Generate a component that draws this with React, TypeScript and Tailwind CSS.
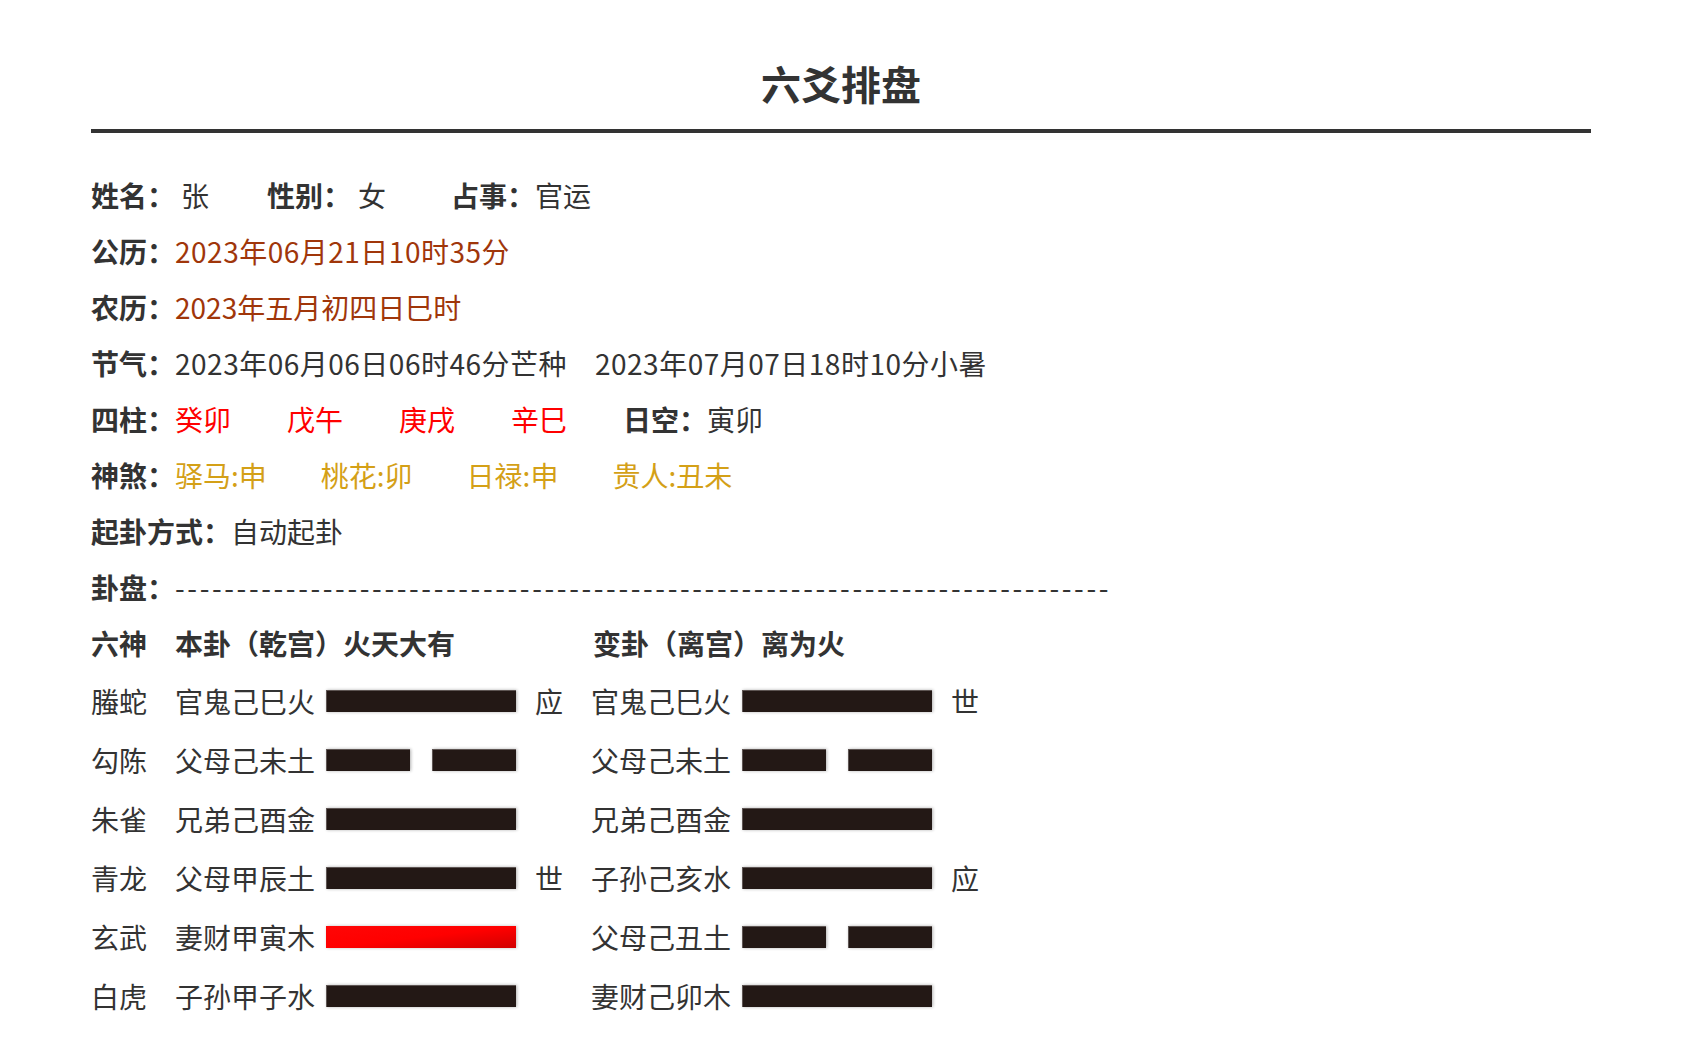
import React from "react";

type Line = { yang: boolean; red?: boolean };

const YAO_ROWS: {
  god: string;
  main: string;
  mainLine: Line;
  mainMark: string;
  change: string;
  changeLine: Line;
  changeMark: string;
}[] = [
  { god: "螣蛇", main: "官鬼己巳火", mainLine: { yang: true }, mainMark: "应", change: "官鬼己巳火", changeLine: { yang: true }, changeMark: "世" },
  { god: "勾陈", main: "父母己未土", mainLine: { yang: false }, mainMark: "", change: "父母己未土", changeLine: { yang: false }, changeMark: "" },
  { god: "朱雀", main: "兄弟己酉金", mainLine: { yang: true }, mainMark: "", change: "兄弟己酉金", changeLine: { yang: true }, changeMark: "" },
  { god: "青龙", main: "父母甲辰土", mainLine: { yang: true }, mainMark: "世", change: "子孙己亥水", changeLine: { yang: true }, changeMark: "应" },
  { god: "玄武", main: "妻财甲寅木", mainLine: { yang: true, red: true }, mainMark: "", change: "父母己丑土", changeLine: { yang: false }, changeMark: "" },
  { god: "白虎", main: "子孙甲子水", mainLine: { yang: true }, mainMark: "", change: "妻财己卯木", changeLine: { yang: true }, changeMark: "" },
];

function Bar({ line }: { line: Line }) {
  if (line.yang) {
    return line.red ? (
      <div className="h-[22px] w-[190px] bg-gradient-to-br from-[#ff0606] via-[#ff0000] to-[#d20000] shadow-[1px_0_3px_rgba(0,0,0,0.25)]" />
    ) : (
      <div className="h-[22px] w-[190px] bg-[#231815] border-t border-l border-[#5e5553] shadow-[1px_0_3px_rgba(0,0,0,0.3)]" />
    );
  }
  return (
    <div className="flex h-[22px] w-[190px] justify-between">
      <div className="h-[22px] w-[84px] bg-[#231815] border-t border-l border-[#5e5553] shadow-[1px_0_3px_rgba(0,0,0,0.3)]" />
      <div className="h-[22px] w-[84px] bg-[#231815] border-t border-l border-[#5e5553] shadow-[1px_0_3px_rgba(0,0,0,0.3)]" />
    </div>
  );
}

export default function App() {
  const dashes = "-".repeat(76);
  return (
    <div className="min-h-screen bg-white text-[#333] font-['Noto_Sans_CJK_SC','Microsoft_YaHei',sans-serif]">
      <div className="ml-[91px] w-[1500px] pt-[53px] pb-[40px]">
        <h1 className="text-center text-[40px] font-bold leading-[60px]">六爻排盘</h1>
        <div className="mt-[16px] h-[4px] bg-[#333]" />

        <div className="mt-[34px] text-[28px] leading-[56px]">
          <div className="flex">
            <span className="font-bold">姓名：</span>
            <span className="ml-[6px] mr-[58px]">张</span>
            <span className="font-bold">性别：</span>
            <span className="ml-[7px] mr-[65px]">女</span>
            <span className="font-bold">占事：</span>
            <span>官运</span>
          </div>
          <div className="flex">
            <span className="font-bold">公历：</span>
            <span className="tracking-[0.5px] text-[#a0360a]">2023年06月21日10时35分</span>
          </div>
          <div className="flex">
            <span className="font-bold">农历：</span>
            <span className="text-[#a0360a]">2023年五月初四日巳时</span>
          </div>
          <div className="flex">
            <span className="font-bold">节气：</span>
            <span className="mr-[28px] tracking-[0.5px]">2023年06月06日06时46分芒种</span>
            <span className="tracking-[0.5px]">2023年07月07日18时10分小暑</span>
          </div>
          <div className="flex">
            <span className="font-bold">四柱：</span>
            <span className="mr-[56px] text-[#ff0000]">癸卯</span>
            <span className="mr-[56px] text-[#ff0000]">戊午</span>
            <span className="mr-[56px] text-[#ff0000]">庚戌</span>
            <span className="mr-[56px] text-[#ff0000]">辛巳</span>
            <span className="font-bold">日空：</span>
            <span>寅卯</span>
          </div>
          <div className="flex">
            <span className="font-bold">神煞：</span>
            <span className="mr-[54px] text-[#d4a017]">驿马:申</span>
            <span className="mr-[54px] text-[#d4a017]">桃花:卯</span>
            <span className="mr-[54px] text-[#d4a017]">日禄:申</span>
            <span className="text-[#d4a017]">贵人:丑未</span>
          </div>
          <div className="flex">
            <span className="font-bold">起卦方式：</span>
            <span>自动起卦</span>
          </div>
          <div className="flex">
            <span className="font-bold">卦盘：</span>
            <span className="tracking-[2.6px] whitespace-nowrap">{dashes}</span>
          </div>

          <div className="flex font-bold">
            <span className="w-[84px]">六神</span>
            <span className="w-[418px]">本卦（乾宫）火天大有</span>
            <span>变卦（离宫）离为火</span>
          </div>

          {YAO_ROWS.map((r) => (
            <div key={r.god} className="flex h-[59px] items-center">
              <span className="w-[84px]">{r.god}</span>
              <span className="w-[140px]">{r.main}</span>
              <div className="ml-[11px]">
                <Bar line={r.mainLine} />
              </div>
              <span className="ml-[19px] w-[28px]">{r.mainMark}</span>
              <span className="ml-[28px] w-[140px]">{r.change}</span>
              <div className="ml-[11px]">
                <Bar line={r.changeLine} />
              </div>
              <span className="ml-[19px] w-[28px]">{r.changeMark}</span>
            </div>
          ))}
        </div>
      </div>
    </div>
  );
}
